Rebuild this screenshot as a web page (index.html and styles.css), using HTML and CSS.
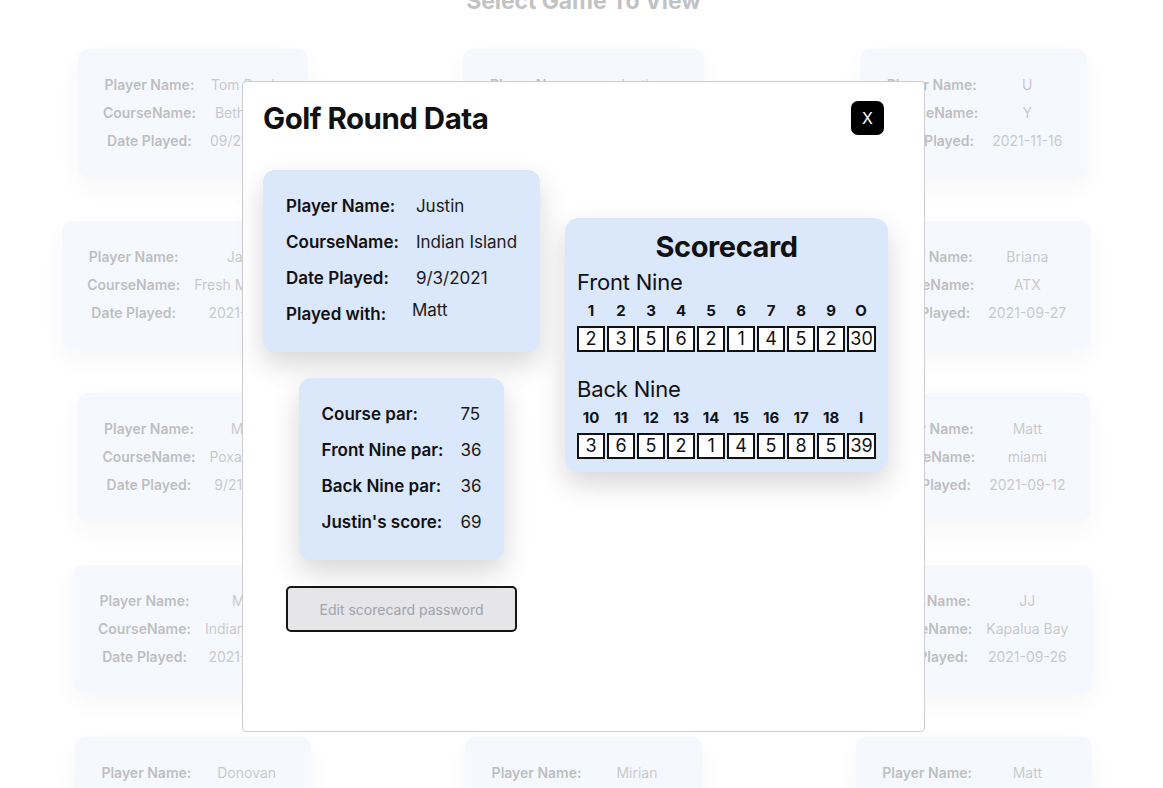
FILE: index.html
```html
<!DOCTYPE html>
<html lang="en">
<head>
<meta charset="utf-8">
<title>Golf Rounds</title>
<link rel="stylesheet" href="styles.css">
</head>
<body>
<div class="page">
  <h2 class="page-title">Select Game To View</h2>
  <div class="games">
    <div class="game"><div class="game-grid">
      <span class="gl">Player Name:</span><span class="gv">Tom Brady</span>
      <span class="gl">CourseName:</span><span class="gv">Bethpage</span>
      <span class="gl">Date Played:</span><span class="gv">09/21/2021</span>
    </div></div>
    <div class="game"><div class="game-grid">
      <span class="gl">Player Name:</span><span class="gv">Justin</span>
      <span class="gl">CourseName:</span><span class="gv">Indian Island</span>
      <span class="gl">Date Played:</span><span class="gv">2021-09-03</span>
    </div></div>
    <div class="game"><div class="game-grid">
      <span class="gl">Player Name:</span><span class="gv">U</span>
      <span class="gl">CourseName:</span><span class="gv">Y</span>
      <span class="gl">Date Played:</span><span class="gv">2021-11-16</span>
    </div></div>

    <div class="game"><div class="game-grid">
      <span class="gl">Player Name:</span><span class="gv">Jason</span>
      <span class="gl">CourseName:</span><span class="gv">Fresh Meadows</span>
      <span class="gl">Date Played:</span><span class="gv">2021-09-19</span>
    </div></div>
    <div class="game"><div class="game-grid">
      <span class="gl">Player Name:</span><span class="gv">Kevin</span>
      <span class="gl">CourseName:</span><span class="gv">Bethpage</span>
      <span class="gl">Date Played:</span><span class="gv">2021-09-18</span>
    </div></div>
    <div class="game"><div class="game-grid">
      <span class="gl">Player Name:</span><span class="gv">Briana</span>
      <span class="gl">CourseName:</span><span class="gv">ATX</span>
      <span class="gl">Date Played:</span><span class="gv">2021-09-27</span>
    </div></div>

    <div class="game"><div class="game-grid">
      <span class="gl">Player Name:</span><span class="gv">Mike</span>
      <span class="gl">CourseName:</span><span class="gv">Poxabogue</span>
      <span class="gl">Date Played:</span><span class="gv">9/21/2021</span>
    </div></div>
    <div class="game"><div class="game-grid">
      <span class="gl">Player Name:</span><span class="gv">Chris</span>
      <span class="gl">CourseName:</span><span class="gv">Montauk</span>
      <span class="gl">Date Played:</span><span class="gv">2021-09-14</span>
    </div></div>
    <div class="game"><div class="game-grid">
      <span class="gl">Player Name:</span><span class="gv">Matt</span>
      <span class="gl">CourseName:</span><span class="gv">miami</span>
      <span class="gl">Date Played:</span><span class="gv">2021-09-12</span>
    </div></div>

    <div class="game"><div class="game-grid">
      <span class="gl">Player Name:</span><span class="gv">Matt</span>
      <span class="gl">CourseName:</span><span class="gv">Indian Island</span>
      <span class="gl">Date Played:</span><span class="gv">2021-09-10</span>
    </div></div>
    <div class="game"><div class="game-grid">
      <span class="gl">Player Name:</span><span class="gv">Sam</span>
      <span class="gl">CourseName:</span><span class="gv">Swan Lake</span>
      <span class="gl">Date Played:</span><span class="gv">2021-09-08</span>
    </div></div>
    <div class="game"><div class="game-grid">
      <span class="gl">Player Name:</span><span class="gv">JJ</span>
      <span class="gl">CourseName:</span><span class="gv">Kapalua Bay</span>
      <span class="gl">Date Played:</span><span class="gv">2021-09-26</span>
    </div></div>

    <div class="game"><div class="game-grid">
      <span class="gl">Player Name:</span><span class="gv">Donovan</span>
      <span class="gl">CourseName:</span><span class="gv">Sandy Pond</span>
      <span class="gl">Date Played:</span><span class="gv">2021-09-05</span>
    </div></div>
    <div class="game"><div class="game-grid">
      <span class="gl">Player Name:</span><span class="gv">Mirian</span>
      <span class="gl">CourseName:</span><span class="gv">Long Island</span>
      <span class="gl">Date Played:</span><span class="gv">2021-09-04</span>
    </div></div>
    <div class="game"><div class="game-grid">
      <span class="gl">Player Name:</span><span class="gv">Matt</span>
      <span class="gl">CourseName:</span><span class="gv">Miami</span>
      <span class="gl">Date Played:</span><span class="gv">2021-09-02</span>
    </div></div>
  </div>
</div>

<div class="overlay">
  <div class="modal">
    <div class="modal-head">
      <h1 class="modal-title">Golf Round Data</h1>
      <button class="close">X</button>
    </div>
    <div class="modal-body">
      <div class="left-col">
        <div class="info-card">
          <div class="info-grid">
            <span class="il">Player Name:</span><span class="iv">Justin</span>
            <span class="il">CourseName:</span><span class="iv">Indian Island</span>
            <span class="il">Date Played:</span><span class="iv">9/3/2021</span>
            <span class="il">Played with:</span><span class="iv raised">Matt</span>
          </div>
        </div>
        <div class="info-card">
          <div class="info-grid">
            <span class="il">Course par:</span><span class="iv">75</span>
            <span class="il">Front Nine par:</span><span class="iv">36</span>
            <span class="il">Back Nine par:</span><span class="iv">36</span>
            <span class="il">Justin's score:</span><span class="iv">69</span>
          </div>
        </div>
        <button class="edit-btn">Edit scorecard password</button>
      </div>

      <div class="scorecard">
        <h2 class="sc-title">Scorecard</h2>
        <h3 class="sc-half">Front Nine</h3>
        <div class="holes"><span>1</span><span>2</span><span>3</span><span>4</span><span>5</span><span>6</span><span>7</span><span>8</span><span>9</span><span>O</span></div>
        <div class="scores"><span>2</span><span>3</span><span>5</span><span>6</span><span>2</span><span>1</span><span>4</span><span>5</span><span>2</span><span>30</span></div>
        <h3 class="sc-half back">Back Nine</h3>
        <div class="holes"><span>10</span><span>11</span><span>12</span><span>13</span><span>14</span><span>15</span><span>16</span><span>17</span><span>18</span><span>I</span></div>
        <div class="scores"><span>3</span><span>6</span><span>5</span><span>2</span><span>1</span><span>4</span><span>5</span><span>8</span><span>5</span><span>39</span></div>
      </div>
    </div>
  </div>
</div>
</body>
</html>
```

FILE: styles.css
```css
* { box-sizing: border-box; }

html, body {
  margin: 0;
  padding: 0;
  background: #ffffff;
  font-family: Inter, "Noto Sans", "DejaVu Sans", sans-serif;
  color: #111;
  overflow: hidden;
}

/* ---------- background page ---------- */
.page {
  margin-top: -12px;
}

.page-title {
  margin: 0 0 34px;
  text-align: center;
  font-size: 23px;
  line-height: 27px;
  font-weight: 700;
  letter-spacing: -0.1px;
  color: #333;
  padding-left: 4px;
}

.games {
  display: grid;
  grid-template-columns: repeat(3, 1fr);
  column-gap: 12px;
  row-gap: 44px;
  padding-left: 4px;
  justify-items: center;
}

.game {
  background: #dde7fc;
  border-radius: 10px;
  height: 128px;
  padding: 21px 25px;
  box-shadow: 0 10px 24px rgba(0, 0, 0, 0.12);
}

.game-grid {
  display: grid;
  grid-template-columns: auto auto;
  column-gap: 14px;
  grid-auto-rows: 28px;
  align-items: center;
  font-size: 14px;
  white-space: nowrap;
}

.gl {
  font-weight: 600;
  color: #262626;
  text-align: center;
}

.gv {
  color: #4a4a4a;
  text-align: center;
}

/* ---------- overlay & modal ---------- */
.overlay {
  position: fixed;
  inset: 0;
  background: rgba(255, 255, 255, 0.7);
  display: flex;
  justify-content: center;
  align-items: flex-start;
  padding-top: 81px;
  padding-left: 4px;
}

.modal {
  width: 683px;
  height: 651px;
  background: #fff;
  border: 1px solid #cdcdcd;
  border-radius: 4px;
  padding: 17px 30px 0 20px;
}

.modal-head {
  display: flex;
  align-items: center;
  justify-content: space-between;
  padding-right: 10px;
}

.modal-title {
  margin: 0;
  font-size: 29.5px;
  line-height: 38px;
  font-weight: 700;
  letter-spacing: -0.5px;
  color: #111;
}

.close {
  width: 33px;
  height: 34px;
  border: none;
  border-radius: 7px;
  background: #000;
  color: #fff;
  font-family: Inter, "Noto Sans", sans-serif;
  font-size: 16px;
  padding: 0;
}

.modal-body {
  display: flex;
  align-items: flex-start;
  gap: 25px;
  margin-top: 33px;
}

.left-col {
  flex-shrink: 0;
  display: flex;
  flex-direction: column;
  align-items: center;
  gap: 26px;
}

.info-card {
  background: #dbe7fb;
  border-radius: 12px;
  padding: 18px 23px 20px;
  box-shadow: 0 12px 28px rgba(0, 0, 0, 0.16);
}

.info-grid {
  display: grid;
  grid-template-columns: auto auto;
  column-gap: 17px;
  grid-auto-rows: 36px;
  align-items: center;
  font-size: 17px;
  white-space: nowrap;
}

.il {
  font-weight: 600;
  color: #111;
}

.iv {
  color: #1a1a1a;
}

.raised {
  padding-bottom: 8px;
  margin-left: -4px;
}

.edit-btn {
  width: 231px;
  height: 46px;
  background: #e6e5e7;
  border: 2px solid #141414;
  border-radius: 5px;
  color: #a0a3ad;
  font-family: Inter, "Noto Sans", sans-serif;
  font-size: 14px;
}

/* ---------- scorecard ---------- */
.scorecard {
  flex-shrink: 0;
  margin-top: 48px;
  width: 323px;
  background: #dbe7fb;
  border-radius: 14px;
  padding: 10px 12px 13px;
  box-shadow: 0 12px 28px rgba(0, 0, 0, 0.16);
}

.sc-title {
  margin: 0;
  text-align: center;
  font-size: 29px;
  line-height: 37px;
  font-weight: 700;
  letter-spacing: -0.4px;
}

.sc-half {
  margin: 4px 0 0;
  font-size: 22px;
  line-height: 26px;
  font-weight: 400;
  letter-spacing: -0.2px;
}

.sc-half.back {
  margin-top: 24px;
}

.holes {
  display: flex;
  gap: 2px;
  margin-top: 7px;
}

.holes span {
  width: 28px;
  text-align: center;
  font-size: 15px;
  line-height: 18px;
  font-weight: 700;
}

.scores {
  display: flex;
  gap: 2px;
  margin-top: 6px;
}

.scores span {
  width: 28px;
  height: 26px;
  background: #fff;
  border: 2px solid #111;
  text-align: center;
  font-size: 18px;
  line-height: 22px;
}

.scores span:last-child {
  width: 29px;
}
```
